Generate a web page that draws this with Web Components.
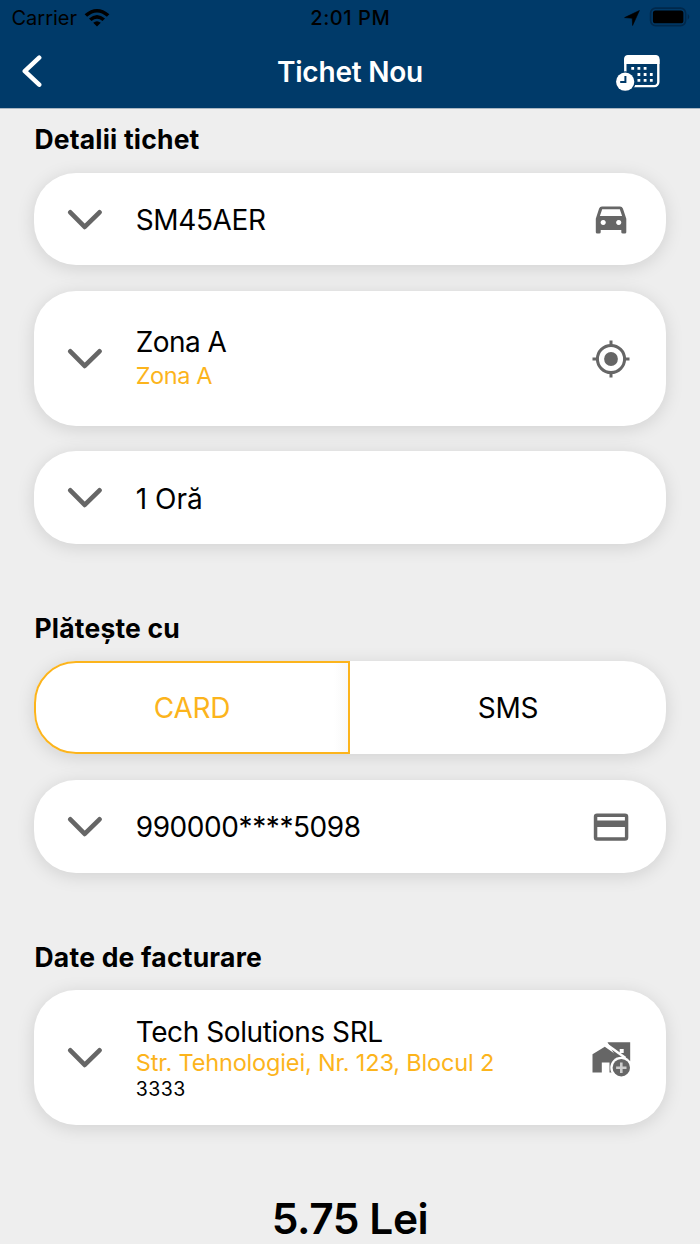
<!DOCTYPE html>
<html lang="ro"><head><meta charset="utf-8"><title>Tichet Nou</title>
<style>
html,body{margin:0;height:1244px;overflow:hidden;background:#eee;font-family:Inter,"Liberation Sans",sans-serif;color:#000}
</style></head><body>
<ticket-page></ticket-page>
<script>
const define=(name,css,html,init)=>customElements.define(name,class extends HTMLElement{
  constructor(){super();const r=this.attachShadow({mode:"open"});r.innerHTML=`<style>*{box-sizing:border-box}${css}</style>${html}`;}
  connectedCallback(){if(init)init(this,this.shadowRoot);}
});

// Inline text whose letter spacing is adjusted to reach the given width.
define("fit-text",":host{display:inline-block;white-space:pre}","<slot></slot>",(el)=>{
  requestAnimationFrame(()=>{
    const w=parseFloat(el.getAttribute("width")),n=el.textContent.length;
    el.style.letterSpacing="0px";
    const d=(w-el.getBoundingClientRect().width)/n;
    el.style.letterSpacing=d+"px";
  });
});

define("status-bar",`
:host{display:grid;grid-template-columns:1fr auto 1fr;align-items:center;height:35px;padding:0 9px 0 11.500px;font-size:20px;line-height:34px}
.l,.r{display:flex;align-items:center}.r{justify-content:flex-end;gap:9px}.l{gap:7px}
.t{font-weight:500;margin-right:2px}svg{display:block}`,`
<div class="l"><fit-text width="65.500">Carrier</fit-text>
<svg width="26" height="20" viewBox="0 0 26 20"><path d="M.6 6.200Q13-4.400 25.400 6.200L22.900 8.800Q13 0 3.100 8.800ZM5 10.600Q13 3.600 21 10.600L18.500 13.100Q13 8.300 7.500 13.100ZM9.200 14.800Q13 11.600 16.800 14.800L13 18.600Z"/></svg></div>
<fit-text class="t" width="80">2:01 PM</fit-text>
<div class="r"><svg width="16" height="16" viewBox="0 0 16 16"><path d="M15.400.5 8.600 15.500 8.200 8.200.6 7.600Z" stroke="#000" stroke-width=".6" stroke-linejoin="round"/></svg>
<svg style="margin-top:-1px" width="42" height="20" viewBox="0 0 42 20"><rect x="1.600" y="1.200" width="35" height="17.400" rx="5" fill="none" stroke="#00284b" stroke-width="1.700"/><rect x="3.900" y="3.500" width="30.500" height="12.800" rx="2.600"/><path d="M38.700 6.800q3.200 2.800 0 6z" fill="#00284b"/></svg></div>`);

define("nav-bar",`
:host{display:grid;grid-template-columns:60px 1fr 60px;align-items:center;height:73px;padding:0 22px;color:#fff;font-size:28px;font-weight:600;line-height:73px}
fit-text{justify-self:center;padding-top:1px}
svg{display:block}.cal{justify-self:end;margin-right:14px}`,`
<svg width="21" height="34" viewBox="0 0 21 34"><path d="M17.200 2.700 2.800 16.200 17.200 29.700" fill="none" stroke="#fff" stroke-width="4.500" stroke-linecap="round" stroke-linejoin="round"/></svg>
<fit-text width="146">Tichet Nou</fit-text>
<svg class="cal" width="50" height="42" viewBox="0 0 50 42"><g transform="translate(.9 3.300)"><rect x="10.400" y="2" width="33" height="29.800" rx="4" fill="none" stroke="#fff" stroke-width="2.400"/><path d="M9.200 9.800V5q0-4.200 4.200-4.200h27q4.200 0 4.200 4.200v4.800Z" fill="#fff"/>
<path d="M16.400 12.600h2.800v2.800h-2.800zM22.600 12.600h2.800v2.800h-2.800zM28.800 12.600h2.800v2.800h-2.800zM22.600 18.800h2.800v2.800h-2.800zM28.800 18.800h2.800v2.800h-2.800zM35 18.800h2.800v2.800H35zM22.600 24.700h2.800v2.800h-2.800zM28.800 24.700h2.800v2.800h-2.800zM35 24.700h2.800v2.800H35z" fill="#fff"/>
<circle cx="10.300" cy="27.400" r="10.500" fill="#003a69"/><circle cx="10.300" cy="27.400" r="9.100" fill="#fff"/><path d="M10.500 21.600v6.200H5.300" fill="none" stroke="#003a69" stroke-width="2"/></g></svg>`);

define("section-title",`:host{display:block;height:34px;line-height:34px;font-size:26.500px;font-weight:700;padding-left:.5px}`,`<slot></slot>`);

const icons={
car:'<path transform="translate(0 1.200)" fill-rule="evenodd" d="M13.500 8.700h18q2.200 0 2.900 2L37.800 21v13.500q0 1.400-1.500 1.400h-1.800q-1.700 0-1.700-1.400v-2.100H12.200v2.100q0 1.400-1.500 1.400H8.800q-1.500 0-1.500-1.400V21l3.300-10.300q.7-2 2.900-2ZM13.700 11.500 11.400 18.200h22.200l-2.300-6.700ZM14.700 22.200a2.600 2.600 0 1 0 .01 0M30.200 22.200a2.600 2.600 0 1 0 .01 0"/>',
locate:'<g fill="none" stroke="#666" stroke-width="3"><circle cx="22.500" cy="22.500" r="13.600"/><path d="M22.500 4v6M22.500 35v6M4 22.500h6M35 22.500h6"/></g><circle cx="22.500" cy="22.500" r="6.900"/>',
card:'<path fill-rule="evenodd" d="M8.500 9.100h28q3.300 0 3.300 3.200v20.700q0 3.200-3.300 3.200h-28q-3.200 0-3.200-3.200V12.300q0-3.200 3.200-3.200ZM8.800 12.600v3.500h27.600v-3.500ZM8.800 22.500v10.200h27.600V22.500Z"/>',
home:'<path d="M19 6.700h22.700v19H30Z"/><path fill-rule="evenodd" d="M4 18.800 16.300 11.300 28 19.500V37H21V27h-7.700v10H4Z"/><path d="M17.500 8.500 37 22.500" stroke="#fff" stroke-width="2.600"/><rect x="31.200" y="13.500" width="4" height="4" fill="#fff"/><circle cx="32.800" cy="32.200" r="11" fill="#fff"/><circle cx="32.800" cy="32.200" r="8.700"/><path d="M32.800 27v10.400M27.600 32.200H38" stroke="#ccc" stroke-width="2.600"/>'
};
const shadow="box-shadow:0 3px 18px rgba(0,0,0,.125)";
define("select-card",`
:host{display:grid;grid-template-columns:102px 1fr 110px;align-items:center;height:var(--h,93px);border-radius:42px;background:#fff;${shadow};font-size:28px;line-height:36px}
.c{margin-left:33px;margin-top:1px}svg{display:block}.i{fill:#666;margin-left:32px;margin-top:.5px}.body{display:flex;flex-direction:column;align-items:flex-start;min-width:0;padding-top:var(--dy,2.200px);margin-left:-.3px}
::slotted(.sub){color:#fcb41c;font-size:23.500px;line-height:var(--sub,32px)}
::slotted(.note){font-size:19.500px;line-height:25px}
`,`<svg class="c" width="36" height="24" viewBox="0 0 36 24"><path d="M3.300 4.300 17.700 18.900 32.500 4.300" fill="none" stroke="#666" stroke-width="4.700" stroke-linecap="round" stroke-linejoin="round"/></svg>
<div class="body"><slot></slot></div><svg class="i" width="46" height="46" viewBox="-.5 -.5 46 46"></svg>`,
(el,r)=>{r.querySelector(".i").innerHTML=icons[el.getAttribute("icon")]||"";});

define("pay-toggle",`
:host{display:grid;grid-template:93px/1fr 1fr;height:93px;border-radius:42px;background:#fff;${shadow};font-size:28px;line-height:95px;text-align:center}
.on{border:2px solid #fcb41c;border-radius:42px 0 0 42px;color:#fcb41c;line-height:91px;background:linear-gradient(to left,#f8f8f8,#fff 14px)}`,
`<div class="on"><slot name="on"></slot></div><div><slot name="off"></slot></div>`);

define("ticket-page",`
:host{display:block;height:1244px;overflow:hidden}
header{height:109px;background:#003a69;border-bottom:1px solid #a9b6c2;box-sizing:border-box}
main{display:flex;flex-direction:column;padding:13px 34px 0}
section{display:flex;flex-direction:column;margin-bottom:67px}
section-title{margin-bottom:16px}
.stack{display:flex;flex-direction:column}
.stack>*+*{margin-top:26px}
.price{align-self:center;font-size:42.500px;font-weight:600;line-height:54px}`,`
<header><status-bar></status-bar><nav-bar></nav-bar></header>
<main>
<section><section-title style="margin-bottom:17px"><fit-text width="165">Detalii tichet</fit-text></section-title><div class="stack">
<select-card icon="car" style="--h:92px"><fit-text width="130">SM45AER</fit-text></select-card>
<select-card icon="locate" style="--h:135px;--dy:0px"><fit-text width="90.500" style="line-height:35px">Zona A</fit-text><fit-text class="sub" width="76.500">Zona A</fit-text></select-card>
<select-card style="margin-top:25px"><fit-text width="67">1 Oră</fit-text></select-card></div></section>
<section><section-title><fit-text width="145.500">Plătește cu</fit-text></section-title><div class="stack">
<pay-toggle><fit-text slot="on" width="76.500">CARD</fit-text><fit-text slot="off" width="60.500">SMS</fit-text></pay-toggle>
<select-card icon="card" style="--dy:1px"><fit-text width="225">990000****5098</fit-text></select-card></div></section>
<section><section-title><fit-text width="227.500">Date de facturare</fit-text></section-title>
<select-card icon="home" style="--h:135px;--sub:28px;--dy:2.400px"><fit-text width="247" style="line-height:34px">Tech Solutions SRL</fit-text><fit-text class="sub" width="358.500">Str. Tehnologiei, Nr. 123, Blocul 2</fit-text><fit-text class="note" width="50">3333</fit-text></select-card></section>
<fit-text class="price" width="156.500">5.75 Lei</fit-text>
</main>`);
</script></body></html>
